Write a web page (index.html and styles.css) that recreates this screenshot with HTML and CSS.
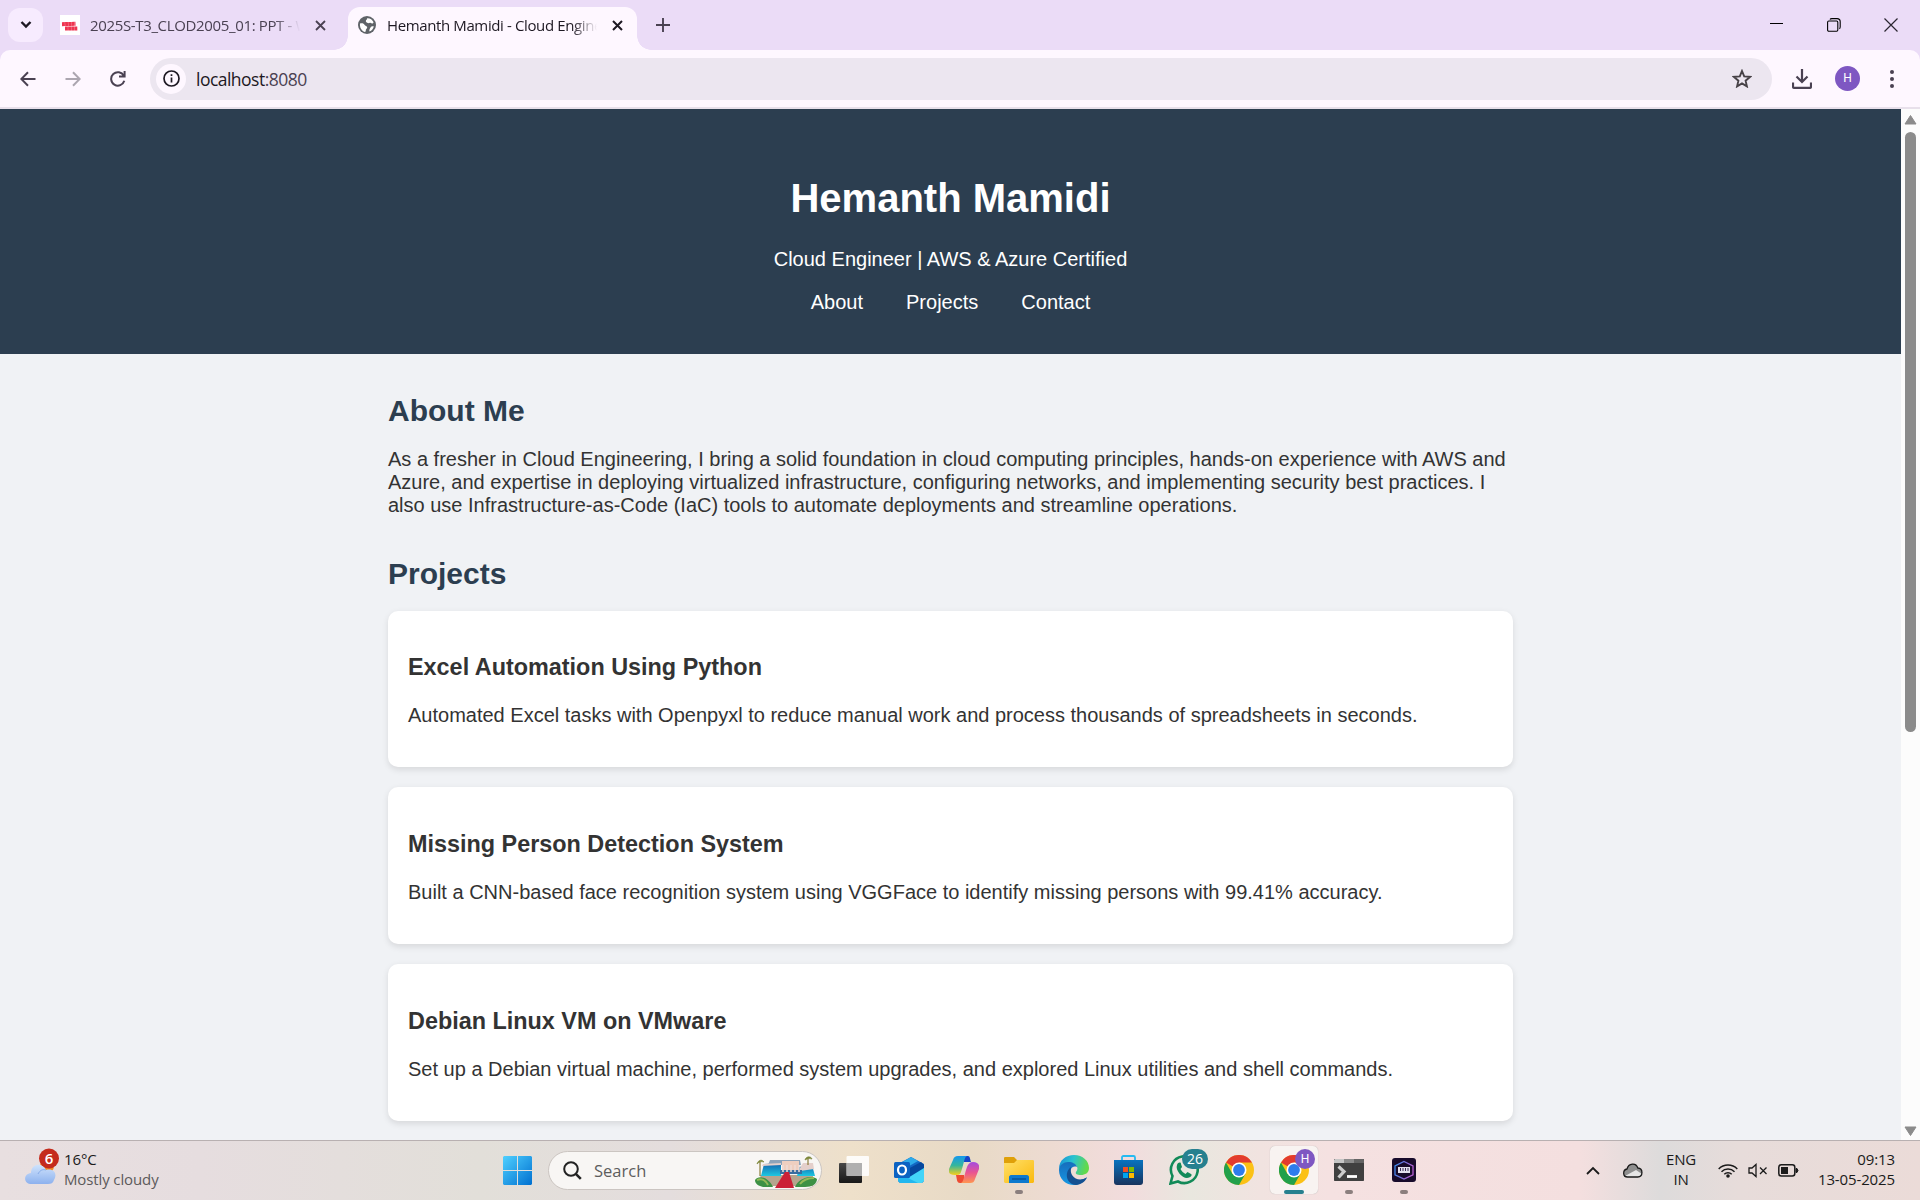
FILE: index.html
```html
<!DOCTYPE html>
<html lang="en">
<head>
<meta charset="utf-8">
<title>Hemanth Mamidi - Cloud Engineer</title>
<link rel="stylesheet" href="styles.css">
</head>
<body>
<div class="tabstrip">
  <button class="tab-search"><svg width="12" height="8" viewBox="0 0 12 8"><path d="M1.500 1 6 5.500 10.500 1" fill="none" stroke="#1d1822" stroke-width="2.400"/></svg></button>
  <div class="tab">
    <svg class="fav" width="20" height="20" viewBox="0 0 20 20"><path fill="#fff" d="M0 0h20v20H0z"/><g fill="none" stroke="#ee3550" stroke-width="4"><path d="M2 9.200 15.500 8.800" stroke-dasharray="2.900 .2"/><path d="M5 13.600 17.500 13.400" stroke-dasharray="2.900 .2"/></g></svg>
    <span class="tab-title t-one">2025S-T3_CLOD2005_01: PPT - Web</span>
    <svg class="x" width="11" height="11" viewBox="0 0 11 11"><path d="m1 1 9 9m0-9-9 9" stroke="#4a4152" stroke-width="1.800"/></svg>
  </div>
  <div class="tab active">
    <svg class="fav" width="18" height="18" viewBox="0 0 18 18"><circle cx="9" cy="9" r="9" fill="#5f6368"/><path fill="#fff" d="M2 7.500c2.500-.5 4 .2 4.600 1.500.5 1.100 2.400.8 2.600 2.200.2 1.400-1.500 1.600-1.400 3 .1 1-.3 1.600-1 1.800C3.500 14.800 1.500 11.500 2 7.500ZM9 2.200c2.900-.3 5.400 1.400 6.600 4-.6 1.500-1.900 1.400-2.800.8-1.100-.7-1.900.5-3.100 0C8.300 6.500 7.400 5.600 8 4.300 8.400 3.500 9.600 3.400 9 2.200Zm3.500 9.300c.8-1.400 2-1.200 3.300-1.200-.4 2.400-2 4.400-4.300 5.200-.5-1.500.2-2.600 1-4Z"/></svg>
    <span class="tab-title t-two">Hemanth Mamidi - Cloud Engineer</span>
    <svg class="x" width="11" height="11" viewBox="0 0 11 11"><path d="m1 1 9 9m0-9-9 9" stroke="#1d1822" stroke-width="2"/></svg>
  </div>
  <svg class="plus" width="14" height="14" viewBox="0 0 14 14"><path d="M7 0v14M0 7h14" stroke="#4a4152" stroke-width="1.900"/></svg>
  <div class="controls">
    <svg width="14" height="14" viewBox="0 0 14 14"><path d="M0 5.500h13" stroke="#000"/></svg>
    <svg width="14" height="14" viewBox="0 0 14 14"><g fill="none" stroke="#000" stroke-width="1.100"><rect x=".6" y="3" width="10.200" height="10.200" rx="1.200"/><path d="M3 1.500C3.300.8 4 .6 5 .6h5c2.200 0 3.200 1 3.200 3.200v5c0 .9-.2 1.600-.8 2"/></g></svg>
    <svg width="14" height="14" viewBox="0 0 14 14"><path d="m.5.5 13 13m0-13-13 13" stroke="#2a2530" stroke-width="1.200"/></svg>
  </div>
</div>
<div class="toolbar">
  <svg class="nav-icon" width="16" height="16" viewBox="0 0 16 16"><path d="M15.500 8H2M8 1.200 1.300 8 8 14.800" fill="none" stroke="#4a4152" stroke-width="2"/></svg>
  <svg class="nav-icon" width="16" height="16" viewBox="0 0 16 16"><path d="M.5 8H14M8 1.200 14.700 8 8 14.800" fill="none" stroke="#aca6b0" stroke-width="2"/></svg>
  <svg class="nav-icon" width="16" height="16" viewBox="0 0 16 16"><path d="M13.800 4.800A6.700 6.700 0 1 0 14.300 9.800M14.600 0v5.600H9" fill="none" stroke="#4a4152" stroke-width="2"/></svg>
  <div class="omnibox">
    <span class="info"><svg width="17" height="17" viewBox="0 0 17 17"><circle cx="8.500" cy="8.500" r="7.500" fill="none" stroke="#1d1822" stroke-width="1.700"/><path d="M8.500 7.500v5M8.500 4.300v1.800" stroke="#1d1822" stroke-width="1.700"/></svg></span>
    <span class="url">localhost<span class="port">:8080</span></span>
    <svg class="star" width="20" height="19" viewBox="0 0 20 19"><path d="m10 2 2.200 5.400 5.800.5-4.400 3.800 1.300 5.700-4.900-3-4.900 3 1.300-5.700L2 7.900l5.800-.5Z" fill="none" stroke="#474247" stroke-width="1.900"/></svg>
  </div>
  <svg class="download" width="20" height="20" viewBox="0 0 20 20"><path d="M10 0v12.500M4.500 7.500l5.500 5.500 5.500-5.500M1 13.500v4c0 .8.400 1.300 1.200 1.300h15.600c.8 0 1.200-.5 1.200-1.300v-4" fill="none" stroke="#4a4152" stroke-width="2.200"/></svg>
  <span class="avatar">H</span>
  <svg class="dots" width="4" height="18" viewBox="0 0 4 18" fill="#4a4152"><circle cx="2" cy="2" r="2"/><circle cx="2" cy="9" r="2"/><circle cx="2" cy="16" r="2"/></svg>
</div>
<div class="viewport">
  <div class="page">
    <header class="hero">
      <h1>Hemanth Mamidi</h1>
      <p class="tagline">Cloud Engineer | AWS &amp; Azure Certified</p>
      <nav><a>About</a> <a>Projects</a> <a>Contact</a></nav>
    </header>
    <main>
      <h2>About Me</h2>
      <p class="bio">As a fresher in Cloud Engineering, I bring a solid foundation in cloud computing principles, hands-on experience with AWS and<br>Azure, and expertise in deploying virtualized infrastructure, configuring networks, and implementing security best practices. I<br>also use Infrastructure-as-Code (IaC) tools to automate deployments and streamline operations.</p>
      <h2 class="h-projects">Projects</h2>
      <article class="card"><h3>Excel Automation Using Python</h3><p>Automated Excel tasks with Openpyxl to reduce manual work and process thousands of spreadsheets in seconds.</p></article>
      <article class="card"><h3>Missing Person Detection System</h3><p>Built a CNN-based face recognition system using VGGFace to identify missing persons with 99.41% accuracy.</p></article>
      <article class="card"><h3>Debian Linux VM on VMware</h3><p>Set up a Debian virtual machine, performed system upgrades, and explored Linux utilities and shell commands.</p></article>
    </main>
  </div>
  <div class="scrollbar">
    <svg width="13" height="10" viewBox="0 0 13 10"><path d="M6.500.5 12 9H1Z" fill="#8b8b8b" stroke="#8b8b8b" stroke-linejoin="round"/></svg>
    <div class="thumb"></div>
    <svg class="down" width="13" height="10" viewBox="0 0 13 10"><path d="M6.500 9.500 12 1H1Z" fill="#8b8b8b" stroke="#8b8b8b" stroke-linejoin="round"/></svg>
  </div>
</div>
<footer class="taskbar">
  <div class="weather">
    <svg width="36" height="38" viewBox="0 0 36 38"><defs><linearGradient id="cl" x2="0" y2="1"><stop stop-color="#cfe3fc"/><stop offset="1" stop-color="#8db1ee"/></linearGradient></defs><circle cx="22" cy="18" r="7" fill="#f08a24"/><path d="M7 36c-9 0-9-10-1-11C6 15 18 14 21 22c7-2 12 3 8 10-1 3-3 4-6 4Z" fill="url(#cl)"/><path d="M13 26c2-4 5-5 8-4" fill="none" stroke="#86abe8"/><circle cx="24" cy="10.500" r="10" fill="#c42b1c"/><text x="24" y="16.200" text-anchor="middle" class="badge-text">6</text></svg>
    <div class="weather-text"><span>16°C</span><span class="muted">Mostly cloudy</span></div>
  </div>
  <svg class="start" width="29" height="29" viewBox="0 0 29 29"><defs><linearGradient id="w" x2="1" y2="1"><stop stop-color="#4fd0ff"/><stop offset="1" stop-color="#0070d0"/></linearGradient></defs><path d="M1 0h13v14H0V1Zm14 0h13l1 1v13H15ZM0 15h14v14H1l-1-1Zm15 0h14v13l-1 1H15Z" fill="url(#w)"/></svg>
  <div class="search">
    <svg class="lens" width="19" height="19" viewBox="0 0 19 19"><circle cx="8" cy="8" r="6.800" fill="none" stroke="#222" stroke-width="2"/><path d="m12.800 12.800 5 5" stroke="#222" stroke-width="2.600"/></svg>
    <span>Search</span>
    <svg class="art" width="62" height="32" viewBox="0 0 62 32"><defs><linearGradient id="gl" x2="0" y2="1"><stop stop-color="#1561ac"/><stop offset="1" stop-color="#1cc8e2"/></linearGradient></defs><path d="M5 19h53v11H8Z" fill="#b6a48e"/><path d="m9 8 17-1v13H6Z" fill="url(#gl)"/><path d="m44 11 13-2 3 11H42Z" fill="url(#gl)"/><path d="M15 4h30l1 5H13Z" fill="#8ea3b9"/><path d="M27 5h17v10H27Z" fill="#efcfc0"/><path d="m8 8 18-1v2L7 10Zm37 4 3-5h10l1 6-14 2Z" fill="#e4cfcb"/><path d="M25 14h22v4H25Z" fill="#3a6d9f"/><path d="M28 9v7m4-7v7m4-7v7m4-7v7m4-7v7" stroke="#efddd6" stroke-width="1.500"/><path d="M30 16h4l5 16H20Z" fill="#cb2037"/><path d="M5 20V6m48 3V2" stroke="#8d7c3c" stroke-width="1.200"/><path d="M2 8c1-4 5-5 7-2-3-1-5 0-7 2Zm48-4c1-4 6-4 7-1-3-1-5 0-7 1Z" fill="#7c8739" stroke="#7c8739" stroke-width=".7"/><path d="M0 24c4-6 14-2 18 7H8c-4-1-8-3-8-7Zm62-1c-7-5-19 0-22 8h10c7 0 12-3 12-8Z" fill="#3d9145"/><path d="M2 24c5-2 9 1 11 5m46-7c-6 0-11 2-14 6" fill="none" stroke="#94b957" stroke-width="2"/></svg>
  </div>
  <div class="apps">
    <div class="app"><svg width="30" height="30" viewBox="0 0 30 30"><defs><linearGradient id="tv" x2="0" y2="1"><stop stop-color="#484848"/><stop offset="1" stop-color="#181818"/></linearGradient></defs><rect y="8" width="23" height="20" rx="1" fill="url(#tv)"/><rect x="7.500" y="1" width="22.500" height="20" rx="1" fill="#fff" fill-opacity=".88"/><path d="M7.500 8H23v13H7.500Z" fill="#9e9e9e" opacity=".75"/></svg></div>
    <div class="app"><svg width="30" height="30" viewBox="0 0 30 30"><path d="M4 9 17 2l13 7v17l-2 2H6l-2-2Z" fill="#1268c3"/><path d="M5 9 17 2l7 4L10 14H5Z" fill="#2dabea"/><path d="M12 15 27 7l3 3v4l-13 8Z" fill="#06479d"/><path d="m30 13-13 8-9 7h20l2-2Z" fill="#43d4f8"/><path d="m4 18 20 10H6l-2-2Z" fill="#22b7ef"/><rect y="7" width="16" height="16" rx="1.500" fill="#0b62c2"/><ellipse cx="8" cy="15" rx="4" ry="4.500" fill="none" stroke="#fff" stroke-width="2.200"/></svg></div>
    <div class="app"><svg width="30" height="30" viewBox="0 0 30 30"><defs><linearGradient id="ca" x2="0" y2="1"><stop stop-color="#1598ee"/><stop offset=".5" stop-color="#35b69c"/><stop offset="1" stop-color="#f6cf1a"/></linearGradient><linearGradient id="cb" x2="0" y2="1"><stop stop-color="#a34be0"/><stop offset=".5" stop-color="#e95492"/><stop offset="1" stop-color="#ff9550"/></linearGradient></defs><path d="M14 1h5c2 0 2 3 3 6h-7Z" fill="#1644c8"/><path d="M16 28h-5c-3 0-3-3-4-8h8Z" fill="#ed4b32"/><path d="M9 1h9c-3 1-3 8-6 16-1 3-3 3-6 3-5 0-7-2-6-6L4 5c1-3 2-4 5-4Z" fill="url(#ca)"/><path d="M21 28h-9c3-1 3-8 6-16 1-3 3-5 6-5 5 0 7 3 6 7l-4 10c-1 3-2 4-5 4Z" fill="url(#cb)"/></svg></div>
    <div class="app running"><svg width="30" height="30" viewBox="0 0 30 30"><defs><linearGradient id="fo" x2="1" y2="1"><stop stop-color="#ffe069"/><stop offset="1" stop-color="#fab90d"/></linearGradient></defs><path d="M0 3c0-1 1-1 1-1h9l3 3h16l1 3v4H0Z" fill="#dfa009"/><path d="M0 8h10l3-3h16l1 1v21l-1 1H1l-1-1Z" fill="url(#fo)"/><path d="M5 28v-6c0-1 1-2 2-2h16c1 0 2 1 2 2v6Z" fill="#0d79ce"/><path d="M8 24h14" stroke="#064c8c" stroke-width="1.200"/></svg></div>
    <div class="app"><svg width="30" height="30" viewBox="0 0 30 30"><defs><linearGradient id="ea" x2="1" y2=".2"><stop stop-color="#168fd7"/><stop offset=".5" stop-color="#2bc3cf"/><stop offset="1" stop-color="#62d94b"/></linearGradient><linearGradient id="eb" x2="0" y2="1"><stop stop-color="#176dbc"/><stop offset="1" stop-color="#1597e3"/></linearGradient></defs><path d="M0 14C0 5 7 0 15 0c9 0 15 6 15 13 0 5-4 7-8 7-4 0-6-1-5-3 4-5-1-9-7-9-5 0-8 2-10 6Z" fill="url(#ea)"/><path d="M0 15C0 10 5 7 9 7c5 0 8 2 9 5-5-2-8 3-6 8 2 6 10 7 16 2-3 5-8 8-13 8C7 30 0 24 0 15Z" fill="url(#eb)"/><path d="M12 12c-7 5-5 17 5 18 5-.5 9-3 11-7.500C18 28 10 21 12 12Z" fill="#145091"/></svg></div>
    <div class="app"><svg width="30" height="30" viewBox="0 0 30 30"><defs><linearGradient id="st" x2="0" y2="1"><stop stop-color="#0873bf"/><stop offset="1" stop-color="#18335e"/></linearGradient></defs><path d="M8 6V2.500C8 1.500 8.500 1 9.500 1h10c1 0 1.500.5 1.500 1.500V6" fill="none" stroke="#26baf1" stroke-width="1.800"/><path d="M0 5h29v22c0 2-1 3-3 3H3c-2 0-3-1-3-3Z" fill="url(#st)"/><path d="M9 12h5v5H9Z" fill="#f25022"/><path d="M15 12h5v5h-5Z" fill="#7fba00"/><path d="M9 18h5v5H9Z" fill="#00a4ef"/><path d="M15 18h5v5h-5Z" fill="#ffb900"/></svg></div>
    <div class="app"><svg width="30" height="30" viewBox="0 0 30 30"><path d="M1.500 28.500 3.500 21A13.400 13.400 0 1 1 9 26.500Z" fill="none" stroke="#128a58" stroke-width="2.600"/><path d="M8 10c1-3 4-3 4-1l1 3-1.500 2c1 2 3 4 5 5l2-2 3.500 2c2 1-1 4-4 4C13 23 6 15 8 10Z" fill="#128a58"/></svg><span class="count">26</span></div>
    <div class="app"><svg width="30" height="30" viewBox="0 0 30 30"><g id="chrome"><circle cx="15" cy="15" r="15" fill="#fbc116"/><path d="M15 15 2 7.500A15 15 0 0 1 28 7.500H15Z" fill="#e33b2e"/><path d="M2 7.500 8.500 19 21.500 18.700 15 30A15 15 0 0 1 2 7.500Z" fill="#22a04b"/><circle cx="15" cy="15" r="7.500" fill="#fff"/><circle cx="15" cy="15" r="5.900" fill="#2f7cec"/></g></svg></div>
    <div class="app current"><svg width="30" height="30" viewBox="0 0 30 30"><use href="#chrome"/></svg><span class="profile">H</span></div>
    <div class="app running"><svg width="30" height="30" viewBox="0 0 30 30"><path d="M0 5c0-.6.400-1 1-1h28c.6 0 1 .4 1 1v20c0 .6-.4 1-1 1H1c-.6 0-1-.4-1-1Z" fill="#404040"/><path d="M0 8V5l1-1h9v4Z" fill="#c6c6c6"/><path d="M10 4h10v4H10Z" fill="#8b8b8b"/><path d="M20 4h9l1 1v3H20Z" fill="#646464"/><path d="m4.500 11.500 5.500 5-5.500 6" fill="none" stroke="#ccc" stroke-width="3.200"/><path d="M13 21.500h10" stroke="#fff" stroke-width="2.800"/></svg></div>
    <div class="app running"><svg width="30" height="30" viewBox="0 0 30 30"><defs><linearGradient id="vm" x2="1" y2=".3"><stop stop-color="#308df0"/><stop offset="1" stop-color="#b35dcf"/></linearGradient></defs><rect x="3" y="3" width="24" height="24" rx="3" fill="#180b2b"/><path d="m15 6.500 9 4.300v9L15 24l-9-4.200v-9Z" fill="none" stroke="url(#vm)" stroke-width="1.300"/><rect x="9" y="12" width="12" height="6" fill="#e4e1ee"/><path d="M11.500 13v3m2.500-3v3m2.500-3v3m2.500-3v3" stroke="#3d3058"/></svg></div>
  </div>
  <div class="tray">
    <svg class="chev" width="14" height="9" viewBox="0 0 14 9"><path d="m1 8 6-6 6 6" fill="none" stroke="#1b1b1b" stroke-width="1.800"/></svg>
    <svg class="cloud" width="20" height="15" viewBox="0 0 20 15"><path d="M4 14C0 14 0 7 4 6 5 0 13-1 15 5c5 0 6 9 0 9Z" fill="#8f8f8f"/><path d="M2 13 13 7l6 4-3 3H4Z" fill="#e6e6e6"/><path d="M4.500 14C-.5 14-.5 7 4 6 5.500 0 13-.8 14.800 5c5.500.3 5.500 9 0 9Z" fill="none" stroke="#1b1b1b" stroke-width="1.300"/></svg>
    <div class="lang"><span>ENG</span><span>IN</span></div>
    <svg class="wifi" width="20" height="15" viewBox="0 0 20 15"><g fill="none" stroke="#1b1b1b" stroke-width="1.500"><path d="M.7 6a13 13 0 0 1 18.600 0M3.500 8.700a9.300 9.300 0 0 1 13 0M6.300 11.300a5.300 5.300 0 0 1 7.400 0"/></g><circle cx="10" cy="13" r="1.800" fill="#1b1b1b"/></svg>
    <svg class="vol" width="20" height="15" viewBox="0 0 20 15"><path d="M1 5h3l4-3.500v12L4 10H1ZM12 4.500l6.500 6.500m0-6.500L12 11" fill="none" stroke="#1b1b1b" stroke-width="1.300"/></svg>
    <svg class="batt" width="21" height="13" viewBox="0 0 21 13"><rect x=".8" y=".8" width="16" height="11.200" rx="2.500" fill="none" stroke="#1b1b1b" stroke-width="1.500"/><path d="M3 3h7v7H3Z" fill="#1b1b1b"/><path d="M18 4.500h1l1 2-1 2h-1Z" fill="#1b1b1b" stroke="#1b1b1b"/></svg>
    <div class="clock"><span>09:13</span><span>13-05-2025</span></div>
  </div>
</footer>
</body>
</html>
```

FILE: styles.css
```css
html { font-size: 20px; }
* { box-sizing: border-box; }
body {
  margin: 0;
  width: 1920px;
  height: 1200px;
  overflow: hidden;
  display: flex;
  flex-direction: column;
  background: #ebdcf7;
  font-family: "Open Sans", "Noto Sans", sans-serif;
}
svg { display: block; flex: none; }
button { border: 0; padding: 0; }

/* Tab strip */
.tabstrip { height: 50px; flex: none; display: flex; align-items: center; padding-left: 8px; }
.tab-search { width: 35px; height: 34px; border-radius: 12px; background: #f7ebfe; display: flex; align-items: center; justify-content: center; }
.tab { width: 288px; height: 43px; margin-top: 7px; padding: 0 22px 7px 0; margin-left: 17px; display: flex; align-items: center; font-size: 15px; color: #4a4152; }
.tab.active { position: relative; width: 289px; padding: 0 14px 7px 10px; margin-left: 0; background: #fef7ff; border-radius: 12px 12px 0 0; color: #1d1822; }
.tab.active::before, .tab.active::after { content: ""; position: absolute; bottom: 0; width: 14px; height: 14px; }
.tab.active::before { left: -14px; background: radial-gradient(circle at 0 0, transparent 13.5px, #fef7ff 14px); }
.tab.active::after { right: -14px; background: radial-gradient(circle at 100% 0, transparent 13.5px, #fef7ff 14px); }
.tab-title { flex: 1; margin-left: 10px; margin-right: 15px; white-space: nowrap; overflow: hidden; mask-image: linear-gradient(90deg, #000 88%, transparent); }
.t-one { letter-spacing: -.35px; }
.t-two { margin-left: 11px; letter-spacing: -.38px; }
.plus { margin-left: 19px; }
.controls { margin-left: auto; display: flex; gap: 43px; padding-right: 22px; }

/* Toolbar */
.toolbar { height: 59px; flex: none; display: flex; align-items: center; padding-left: 20px; background: #fef7ff; border-bottom: 2px solid #e8e0eb; border-radius: 10px 10px 0 0; }
.nav-icon { margin-right: 29px; }
.omnibox { width: 1622px; height: 42px; margin-left: -5px; border-radius: 21px; background: #ece6f0; display: flex; align-items: center; padding: 0 20px 0 6px; }
.info { width: 30px; height: 30px; border-radius: 50%; background: #fef7ff; display: flex; align-items: center; justify-content: center; }
.url { flex: 1; margin-left: 10px; font-size: 17.5px; letter-spacing: -.52px; color: #1d1822; }
.port { color: #4a4152; }
.download { margin-left: 20px; }
.avatar { width: 25px; height: 25px; margin-left: 23px; border-radius: 50%; background: #7e57c2; color: #fff; font: 12px/25px Roboto, sans-serif; text-align: center; }
.dots { margin-left: 30px; }

/* Page */
.viewport { flex: 1; min-height: 0; display: flex; }
.page { width: 1901px; overflow: hidden; background: #f0f2f5; color: #333; font: 20px "Liberation Sans", Arial, sans-serif; }
.hero { background: #2c3e50; color: #fff; text-align: center; padding: 2rem; }
h1 { font-size: 2em; margin: .67em 0; }
.tagline { margin: 1rem 0; }
.hero nav a { margin: 0 18.75px; }
main { width: 1125px; margin: 2rem auto 0; }
h2 { margin: 0; font-size: 1.5em; color: #2c3e50; }
.h-projects { margin-top: 2rem; }
.bio { margin: 1rem 0 0; white-space: nowrap; }
.card { background: #fff; margin-top: 1rem; padding: 1rem; border-radius: 10px; box-shadow: 0 2.5px 6px rgba(0, 0, 0, .1); }
h3 { font-size: 1.17em; margin: 1em 0; }
.card p { margin: 1rem 0; white-space: nowrap; }

/* Scrollbar */
.scrollbar { width: 19px; background: #fcfcfc; display: flex; flex-direction: column; align-items: center; padding: 6px 0 4px; }
.thumb { width: 11px; height: 600px; margin-top: 7px; border-radius: 6px; background: #8b8b8b; }
.down { margin-top: auto; }

/* Taskbar */
.taskbar {
  height: 60px;
  flex: none;
  display: flex;
  align-items: center;
  padding-bottom: 1px;
  border-top: 1px solid #b8b0b1;
  font-size: 15px;
  color: #1b1b1b;
  background: linear-gradient(90deg, #e8dfe0 0, #e6dddf 200px, #e2dfd9 480px, #e4dddd 670px, #eee0ca 850px, #e8dac6 970px, #f2dcdd 1130px, #e9e7df 1190px, #f1e3e0 1260px, #f5e1e1 1330px, #f4dfdf 1580px, #dddbdb 1660px, #e7dcda 1740px, #ebdbd8 1920px);
}
.weather { width: 503px; padding-left: 25px; display: flex; align-items: center; }
.weather svg { margin: -6px 3px 0 0; }
.badge-text { font-size: 15px; font-weight: 600; fill: #fff; }
.weather-text, .lang, .clock { display: flex; flex-direction: column; margin-top: -3px; line-height: 20px; }
.weather-text { letter-spacing: -.12px; }
.muted { color: #5c5a5b; }
.search { width: 274px; height: 39px; margin-left: 16px; padding: 0 4px 0 14px; display: flex; align-items: center; border-radius: 20px; background: #f8f6f4; border: 1px solid #cbc5c1; font-size: 16.5px; color: #5d5d5d; }
.search span { flex: 1; margin-left: 12px; }
.art { margin-top: 3px; }
.apps { display: flex; gap: 7px; margin-left: 8px; }
.app { position: relative; width: 48px; height: 48px; display: flex; align-items: center; justify-content: center; }
.app.running::after, .app.current::after { content: ""; position: absolute; left: 20px; bottom: 0; width: 8px; height: 4px; border-radius: 2px; background: #8b7f7e; }
.app.current { background: #f8f3f1; border-radius: 5px; box-shadow: 0 0 1px #aaa; }
.app.current::after { left: 14px; width: 20px; background: #26808f; }
.count { position: absolute; left: 22px; top: 3px; width: 26px; height: 20px; border-radius: 10px; background: #26808f; color: #fff; font-size: 14px; line-height: 20px; text-align: center; }
.profile { position: absolute; left: 25px; top: 3px; width: 20px; height: 20px; border-radius: 50%; background: #7e57c2; color: #fff; font: 12px/20px Roboto, sans-serif; text-align: center; }
.tray { flex: 1; display: flex; align-items: center; padding-right: 25px; }
.chev { margin-left: 158px; }
.cloud { margin-left: 23px; }
.lang { width: 30px; margin-left: 23px; align-items: center; letter-spacing: -.2px; }
.wifi { margin-left: 22px; }
.vol { margin-left: 10px; }
.batt { margin-left: 10px; }
.clock { margin-left: auto; align-items: flex-end; letter-spacing: -.12px; }
```
